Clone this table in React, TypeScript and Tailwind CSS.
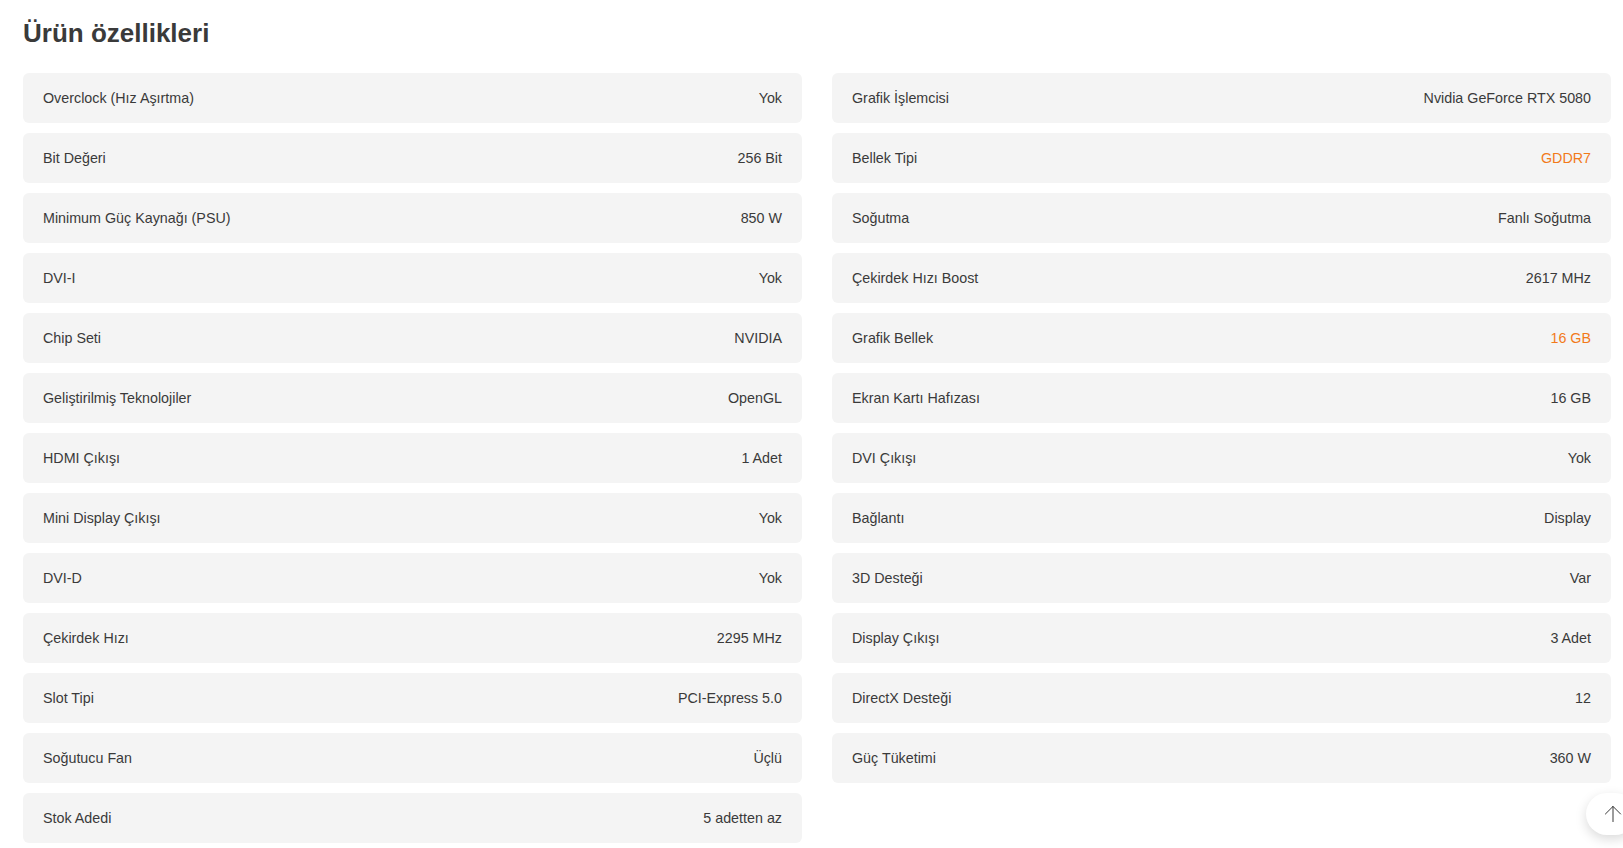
import { ArrowUp } from 'lucide-react'

const left: [string, string, boolean?][] = [
  ['Overclock (Hız Aşırtma)', 'Yok'],
  ['Bit Değeri', '256 Bit'],
  ['Minimum Güç Kaynağı (PSU)', '850 W'],
  ['DVI-I', 'Yok'],
  ['Chip Seti', 'NVIDIA'],
  ['Geliştirilmiş Teknolojiler', 'OpenGL'],
  ['HDMI Çıkışı', '1 Adet'],
  ['Mini Display Çıkışı', 'Yok'],
  ['DVI-D', 'Yok'],
  ['Çekirdek Hızı', '2295 MHz'],
  ['Slot Tipi', 'PCI-Express 5.0'],
  ['Soğutucu Fan', 'Üçlü'],
  ['Stok Adedi', '5 adetten az'],
]

const right: [string, string, boolean?][] = [
  ['Grafik İşlemcisi', 'Nvidia GeForce RTX 5080'],
  ['Bellek Tipi', 'GDDR7', true],
  ['Soğutma', 'Fanlı Soğutma'],
  ['Çekirdek Hızı Boost', '2617 MHz'],
  ['Grafik Bellek', '16 GB', true],
  ['Ekran Kartı Hafızası', '16 GB'],
  ['DVI Çıkışı', 'Yok'],
  ['Bağlantı', 'Display'],
  ['3D Desteği', 'Var'],
  ['Display Çıkışı', '3 Adet'],
  ['DirectX Desteği', '12'],
  ['Güç Tüketimi', '360 W'],
]

function Row({ label, value, accent }: { label: string; value: string; accent?: boolean }) {
  return (
    <div className="h-[50px] bg-[#f4f4f4] rounded-md flex items-center justify-between px-5 pt-[2px] text-[14.3px]">
      <span className="text-[#3a3a3a]">{label}</span>
      <span className={accent ? 'text-[#f27a1a]' : 'text-[#3a3a3a]'}>{value}</span>
    </div>
  )
}

export default function App() {
  return (
    <div className="min-h-screen bg-white pl-[23px] pr-[12px] pt-[18px] font-['Liberation_Sans',Arial,sans-serif]">
      <h1 className="text-[26px] leading-[31px] font-bold text-[#3a3a3a] mb-[24px]">Ürün özellikleri</h1>

      <div className="grid grid-cols-2 gap-x-[30px]">
        {/* Left */}
        <div className="flex flex-col gap-[10px]">
          {left.map(([l, v, a]) => (
            <Row key={l} label={l} value={v} accent={a} />
          ))}
        </div>

        {/* Right */}
        <div className="flex flex-col gap-[10px]">
          {right.map(([l, v, a]) => (
            <Row key={l} label={l} value={v} accent={a} />
          ))}
        </div>
      </div>

      <button className="fixed left-[1586px] top-[793px] w-[50px] h-[42px] rounded-full bg-white shadow-[0_4px_12px_rgba(0,0,0,0.15)] flex items-center pl-[14px]">
        <ArrowUp size={26} strokeWidth={0.9} className="text-[#333]" />
      </button>
    </div>
  )
}
